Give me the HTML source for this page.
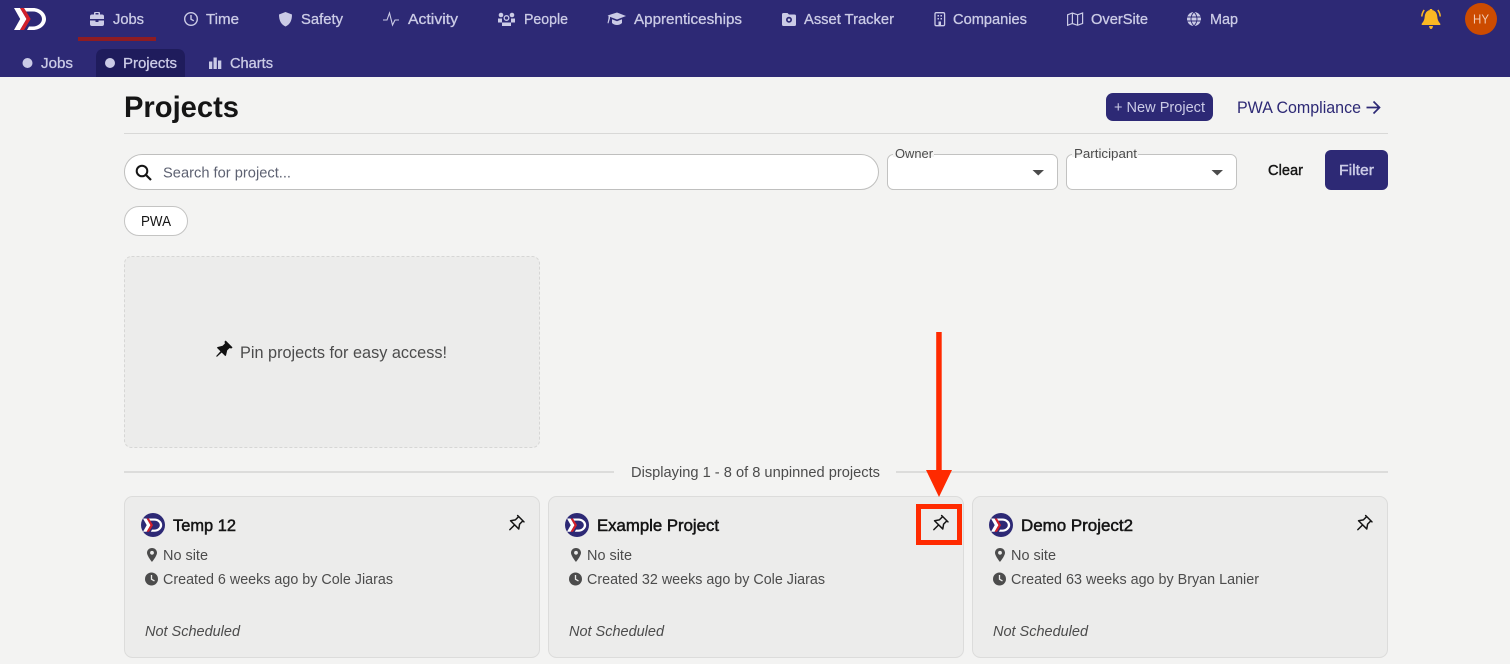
<!DOCTYPE html>
<html><head><meta charset="utf-8"><title>Projects</title>
<style>
html,body{margin:0;padding:0;background:#f3f3f2;width:1510px;height:664px;overflow:hidden}
svg{display:block}
text{font-family:"Liberation Sans",sans-serif;font-size:14.500px}
.n{fill:#cbcbe6;stroke:#cbcbe6;stroke-width:.3}
.ic{fill:#cbcbe6}
.ol{fill:none;stroke:#cbcbe6;stroke-width:1.4}
.g{fill:#4c4c4c;font-size:14.500px}
.t{fill:#151515;stroke:#151515;stroke-width:.5;font-size:16.500px}
</style></head><body>
<svg width="1510" height="664" viewBox="0 0 1510 664" xmlns="http://www.w3.org/2000/svg">
<defs>
<g id="logo">
<path fill="#fff" d="M14 8h6l6.500 11L20 30h-6l6.200-11z"/>
<path fill="#d3202a" d="M20 8h4l6.700 11L24 30h-4l6.500-11z"/>
<path fill="#fff" d="M24 8H33C40 8 46 13 46 19C46 25 40 30 33 30H27L29 26.500H33C38 26.500 42 23 42 19C42 15 38 11.500 33 11.500H26.200z"/>
</g>
<g id="pin"><path fill="none" stroke="#151515" stroke-width="1.500" stroke-linecap="round" stroke-linejoin="round" d="M-4.500-7.500H4.500M-3-7.500V-2.800L-5.800 1.200H5.800L3-2.800V-7.500M0 1.200V8"/></g>
<g id="card">
<rect x=".5" y=".5" width="415" height="161" rx="8" fill="#ececeb" stroke="#dcdcdb"/>
<circle cx="29" cy="29" r="12" fill="#2d2975"/>
<g transform="translate(19 22.500) scale(.6) translate(-14 -8)"><use href="#logo"/></g>
<use href="#pin" transform="translate(391.500 28) rotate(45)"/>
<path fill="#4c4c4c" d="M28 52c-2.800 0-5 2.100-5 4.800 0 3.200 5 9.200 5 9.200s5-6 5-9.200c0-2.700-2.200-4.800-5-4.800zm0 6.700a1.900 1.900 0 1 1 0-3.800 1.900 1.900 0 0 1 0 3.800z"/>
<circle cx="27.500" cy="83" r="6.500" fill="#4c4c4c"/>
<path d="M27.500 79v4.200l3 1.800" fill="none" stroke="#ececeb" stroke-width="1.300"/>
</g>
</defs>

<rect width="1510" height="664" fill="#f3f3f2"/>
<rect width="1510" height="77" fill="#2d2975"/>
<use href="#logo"/>

<rect x="78" y="37" width="78" height="4" fill="#8e1c22"/>
<path class="ic" d="M90 16.500q0-2 2-2h2v-1.500q0-1 1-1h4q1 0 1 1v1.500h2q2 0 2 2V19H90zM95.500 13v1.500h3V13zM90 20.500h5.500V22h3v-1.500h5.500V24q0 2-2 2H92q-2 0-2-2z"/>
<text class="n" x="113" y="24" textLength="31" lengthAdjust="spacingAndGlyphs">Jobs</text>
<circle class="ol" cx="191" cy="19" r="6.300"/><path class="ol" d="M191 15v4.200l2.800 1.600"/>
<text class="n" x="206" y="24" textLength="33" lengthAdjust="spacingAndGlyphs">Time</text>
<path class="ic" d="M285.500 12l6.500 2.500c0 6-2 10-6.500 12-4.500-2-6.500-6-6.500-12z"/>
<text class="n" x="301" y="24" textLength="42" lengthAdjust="spacingAndGlyphs">Safety</text>
<path class="ol" style="stroke-width:1.100" d="M383 20h4l2.500-7 3 12 2.500-5h4"/>
<text class="n" x="408" y="24" textLength="50" lengthAdjust="spacingAndGlyphs">Activity</text>
<circle class="ic" cx="501" cy="15" r="2.300"/><circle class="ic" cx="512" cy="15" r="2.300"/><circle class="ol" style="stroke-width:1.300" cx="506.500" cy="18" r="2.300"/><path class="ic" d="M498 18.500h4v4h-4zM511 18.500h4v4h-4zM502 22.500h9v3.500h-9z"/>
<text class="n" x="524" y="24" textLength="44" lengthAdjust="spacingAndGlyphs">People</text>
<path class="ic" d="M617 12.500l9 3.500-9 3.500-7-2.600v1.500l-1.500 5-1-.3 1-4.900v-2.300l-1-.4zM612 19.300l5 1.900 5-1.900v3.700q-2 2-5 2t-5-2z"/>
<text class="n" x="634" y="24" textLength="108" lengthAdjust="spacingAndGlyphs">Apprenticeships</text>
<path class="ic" fill-rule="evenodd" d="M782 14.500q0-1.500 1.500-1.500h4l1.500 1.500h5.500q1.500 0 1.500 1.500v8.500q0 1.500-1.500 1.500h-11q-1.500 0-1.500-1.500zM789 16.800a3 3 0 1 0 0 6 3 3 0 0 0 0-6z"/><circle class="ic" cx="789" cy="19.800" r="1.300"/>
<text class="n" x="804" y="24" textLength="90" lengthAdjust="spacingAndGlyphs">Asset Tracker</text>
<rect class="ol" style="stroke-width:1.300" x="935" y="12.700" width="9.600" height="13" rx="1.300"/><path class="ic" d="M937.500 15h1.500v1.500h-1.500zM940.500 15h1.500v1.500h-1.500zM937.500 18h1.500v1.500h-1.500zM940.500 18h1.500v1.500h-1.500zM938.500 21.500h2.500v3.500h-2.500z"/>
<text class="n" x="953" y="24" textLength="74" lengthAdjust="spacingAndGlyphs">Companies</text>
<path class="ol" style="stroke-width:1.200" d="M1067.600 14.800l4.800-1.800 5.200 1.800 5-1.800v10.500l-5 1.800-5.200-1.800-4.800 1.800zM1072.400 13v10.500M1077.600 14.800v10.500"/>
<text class="n" x="1091" y="24" textLength="57" lengthAdjust="spacingAndGlyphs">OverSite</text>
<circle class="ic" cx="1194" cy="19" r="7"/><path d="M1187 17h14M1187 21h14M1194 12c-4 4-4 10 0 14M1194 12c4 4 4 10 0 14" fill="none" stroke="#2d2975" stroke-width=".9"/>
<text class="n" x="1210" y="24" textLength="28" lengthAdjust="spacingAndGlyphs">Map</text>

<path fill="#fcb823" d="M1431 10c4.300 0 6 3.200 6.300 6.800.3 4 1.800 5.300 3 7v1.200h-18.600v-1.200c1.200-1.700 2.700-3 3-7 .3-3.600 2-6.800 6.300-6.800z"/>
<path fill="#fcb823" d="M1429.800 9h2.400v2.500h-2.400zM1429 26h4q-.5 3-2 3t-2-3z"/>
<path d="M1421.800 16.500q.2-3.500 2.400-6.500M1440.200 16.500q-.2-3.500-2.400-6.500" fill="none" stroke="#fcb823" stroke-width="1.500"/>
<circle cx="1481" cy="19" r="16" fill="#cc4b00"/>
<text x="1473" y="23.500" textLength="16" lengthAdjust="spacingAndGlyphs" style="font-size:12.500px;fill:#f3cdb5">HY</text>

<circle class="ic" cx="27.500" cy="63" r="5"/>
<text class="n" x="41" y="68" textLength="32" lengthAdjust="spacingAndGlyphs">Jobs</text>
<path d="M96 77V57q0-8 8-8h73q8 0 8 8v20z" fill="#1f1c5c"/>
<circle class="ic" cx="110" cy="63" r="5"/>
<text class="n" x="123" y="68" textLength="54" lengthAdjust="spacingAndGlyphs">Projects</text>
<path class="ic" d="M209 61.500h3.300V69H209zM213.500 57.500h3.300V69h-3.300zM218 60.500h3.300V69H218z"/>
<text class="n" x="230" y="68" textLength="43" lengthAdjust="spacingAndGlyphs">Charts</text>

<text x="124" y="117" textLength="115" lengthAdjust="spacingAndGlyphs" style="font-size:29.500px;font-weight:700;fill:#151515">Projects</text>
<rect x="1106" y="93" width="107" height="28" rx="7" fill="#2d2975"/>
<text x="1114" y="112" textLength="91" lengthAdjust="spacingAndGlyphs" style="fill:#cbcbe6">+ New Project</text>
<text x="1237" y="113" textLength="124" lengthAdjust="spacingAndGlyphs" style="font-size:16.500px;fill:#2d2975">PWA Compliance</text>
<path d="M1366.500 107.500h12.500M1373.500 101.500l6 6-6 6" fill="none" stroke="#2d2975" stroke-width="1.700"/>
<rect x="124" y="133" width="1264" height="1" fill="#d8d8d7"/>

<rect x="124.500" y="154.500" width="754" height="35" rx="17.500" fill="#fff" stroke="#bfbfbe"/>
<circle cx="142" cy="171" r="5.300" fill="none" stroke="#151515" stroke-width="2"/><path d="M146 175l5 5" stroke="#151515" stroke-width="2.200"/>
<text x="163" y="177.500" textLength="128" lengthAdjust="spacingAndGlyphs" style="font-size:14.500px;fill:#5e6272">Search for project...</text>

<rect x="887.500" y="154.500" width="170" height="35" rx="6" fill="#fff" stroke="#c2c2c1"/>
<rect x="893" y="152" width="41" height="5" fill="#f3f3f2"/>
<text x="895" y="158" textLength="38" lengthAdjust="spacingAndGlyphs" style="font-size:12.500px;fill:#4c4c4c">Owner</text>
<path d="M1032.500 170h11.500l-5.750 5.500z" fill="#4c4c4c"/>
<rect x="1066.500" y="154.500" width="170" height="35" rx="6" fill="#fff" stroke="#c2c2c1"/>
<rect x="1072" y="152" width="66" height="5" fill="#f3f3f2"/>
<text x="1074" y="158" textLength="63" lengthAdjust="spacingAndGlyphs" style="font-size:12.500px;fill:#4c4c4c">Participant</text>
<path d="M1211.500 170h11.500l-5.750 5.500z" fill="#4c4c4c"/>
<text x="1268" y="175" textLength="35" lengthAdjust="spacingAndGlyphs" style="fill:#151515;stroke:#151515;stroke-width:.4">Clear</text>
<rect x="1325" y="150" width="63" height="40" rx="6" fill="#2d2975"/>
<text class="n" x="1339" y="175" textLength="35" lengthAdjust="spacingAndGlyphs" style="stroke-width:.4">Filter</text>

<rect x="124.500" y="206.500" width="63" height="29" rx="14.500" fill="#fff" stroke="#c4c4c3"/>
<text x="141" y="226" textLength="30" lengthAdjust="spacingAndGlyphs" style="fill:#151515">PWA</text>

<rect x="124.500" y="256.500" width="415" height="191" rx="7" fill="#ececeb" stroke="#d6d6d5" stroke-dasharray="3 2"/>
<g transform="translate(223 350) rotate(45) scale(1.080)"><path fill="#111" d="M-4.500-8H4.500V-6.500L3-5.500V-2.500L5.500 1.500V2.500H-5.500V1.500L-3-2.500V-5.500L-4.500-6.500zM-.8 2.500H.8L.5 8.500H-.5z"/></g>
<text x="240" y="358" textLength="207" lengthAdjust="spacingAndGlyphs" style="font-size:16.500px;fill:#4c4c4c">Pin projects for easy access!</text>

<rect x="124" y="471" width="490" height="2" fill="#dcdcdb"/>
<rect x="896" y="471" width="492" height="2" fill="#dcdcdb"/>
<text class="g" x="631" y="477" textLength="249" lengthAdjust="spacingAndGlyphs">Displaying 1 - 8 of 8 unpinned projects</text>

<use href="#card" x="124" y="496"/>
<text class="t" x="173" y="531" textLength="63" lengthAdjust="spacingAndGlyphs">Temp 12</text>
<text class="g" x="163" y="560" textLength="45" lengthAdjust="spacingAndGlyphs">No site</text>
<text class="g" x="163" y="584" textLength="230" lengthAdjust="spacingAndGlyphs">Created 6 weeks ago by Cole Jiaras</text>
<text class="g" x="145" y="636" textLength="95" lengthAdjust="spacingAndGlyphs" style="font-style:italic">Not Scheduled</text>

<use href="#card" x="548" y="496"/>
<text class="t" x="597" y="531" textLength="122" lengthAdjust="spacingAndGlyphs">Example Project</text>
<text class="g" x="587" y="560" textLength="45" lengthAdjust="spacingAndGlyphs">No site</text>
<text class="g" x="587" y="584" textLength="238" lengthAdjust="spacingAndGlyphs">Created 32 weeks ago by Cole Jiaras</text>
<text class="g" x="569" y="636" textLength="95" lengthAdjust="spacingAndGlyphs" style="font-style:italic">Not Scheduled</text>

<use href="#card" x="972" y="496"/>
<text class="t" x="1021" y="531" textLength="112" lengthAdjust="spacingAndGlyphs">Demo Project2</text>
<text class="g" x="1011" y="560" textLength="45" lengthAdjust="spacingAndGlyphs">No site</text>
<text class="g" x="1011" y="584" textLength="248" lengthAdjust="spacingAndGlyphs">Created 63 weeks ago by Bryan Lanier</text>
<text class="g" x="993" y="636" textLength="95" lengthAdjust="spacingAndGlyphs" style="font-style:italic">Not Scheduled</text>

<rect x="918.500" y="506.500" width="41" height="36" fill="none" stroke="#ff2a00" stroke-width="5"/>
<rect x="936.200" y="332" width="5.500" height="140" fill="#ff2a00"/>
<path d="M926 470h26l-13 27z" fill="#ff2a00"/>
</svg>
</body></html>
